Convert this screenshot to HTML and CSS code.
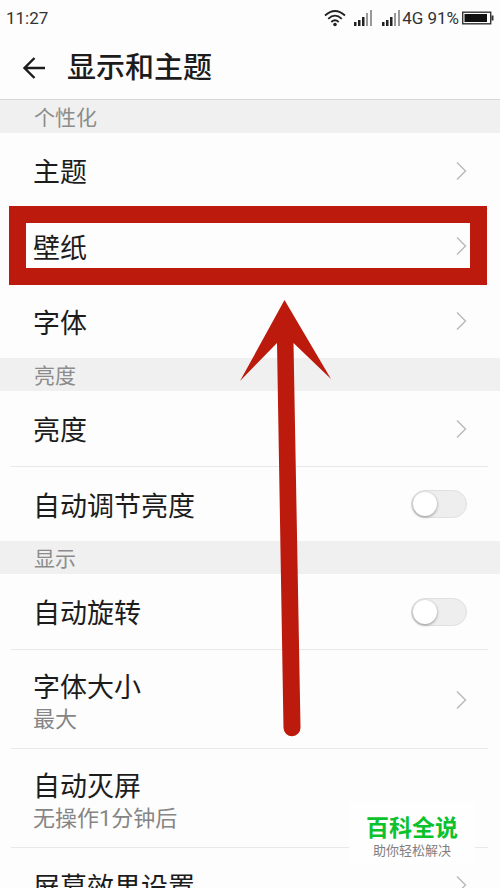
FILE: index.html
```html
<!DOCTYPE html>
<html lang="zh-CN">
<head>
    <meta charset="UTF-8">
    <meta name="viewport" content="width=device-width, initial-scale=1.0">
    <title>显示和主题</title>
    <link rel="stylesheet" href="styles.css">
</head>
<body>
    <div class="screen">
        <div class="status-bar">
            <span class="time">11:27</span>
            <div class="status-icons">
                <svg class="wifi" width="22" height="18" viewBox="0 0 22 18" fill="none" stroke="#222" stroke-width="1.800">
                    <path d="M1 6.500Q11 -2.500 21 6.500M4.200 9.800Q11 3.500 17.800 9.800M7.300 13Q11 9.500 14.700 13"/>
                    <circle cx="11" cy="15.500" r="1.800" fill="#222" stroke="none"/>
                </svg>
                <svg class="signal" width="19" height="18" viewBox="0 0 19 18">
                    <path d="M0 13h2.500v4H0zM4 11h2.500v6H4zM8 8h2.500v9H8z" fill="#222"/>
                    <path d="M12 4h2v13h-2zM16 1h2v16h-2z" fill="#999"/>
                </svg>
                <svg class="signal-2" width="19" height="18" viewBox="0 0 19 18">
                    <path d="M0 13h2.500v4H0zM4 11h2.500v6H4zM8 8h2.500v9H8z" fill="#222"/>
                    <path d="M12 4h2v13h-2zM16 1h2v16h-2z" fill="#999"/>
                </svg>
                <span class="network">4G</span>
                <span class="percent">91%</span>
                <svg class="battery" width="32" height="14" viewBox="0 0 32 14">
                    <rect x="0.700" y="1.200" width="28" height="11.600" fill="none" stroke="#333" stroke-width="1.400"/>
                    <path d="M2.500 3h22.500v8H2.500z" fill="#111"/>
                    <path d="M29.500 4.500h2v5h-2z" fill="#333"/>
                </svg>
            </div>
        </div>

        <header class="header">
            <button class="back" aria-label="返回">
                <svg width="24" height="24" viewBox="0 0 24 24" fill="none" stroke="#1c1c1c" stroke-width="2.400">
                    <path d="M12.500 2L2.500 12l10 10M2.500 12H23"/>
                </svg>
            </button>
            <h1>显示和主题</h1>
        </header>

        <main>
            <h2>个性化</h2>
            <ul>
                <li>
                    <a class="row" href="#">
                        <span class="title">主题</span>
                        <svg class="chevron" width="12" height="20" viewBox="0 0 12 20"><path d="M2 1.500L10.500 10 2 18.500"/></svg>
                    </a>
                </li>
                <li class="marked">
                    <a class="row" href="#">
                        <span class="title">壁纸</span>
                        <svg class="chevron" width="12" height="20" viewBox="0 0 12 20"><path d="M2 1.500L10.500 10 2 18.500"/></svg>
                    </a>
                </li>
                <li>
                    <a class="row" href="#">
                        <span class="title">字体</span>
                        <svg class="chevron" width="12" height="20" viewBox="0 0 12 20"><path d="M2 1.500L10.500 10 2 18.500"/></svg>
                    </a>
                </li>
            </ul>

            <h2>亮度</h2>
            <ul>
                <li>
                    <a class="row" href="#">
                        <span class="title">亮度</span>
                        <svg class="chevron" width="12" height="20" viewBox="0 0 12 20"><path d="M2 1.500L10.500 10 2 18.500"/></svg>
                    </a>
                </li>
                <li>
                    <div class="row">
                        <label class="title" for="autoBrightness">自动调节亮度</label>
                        <input class="switch" type="checkbox" id="autoBrightness">
                    </div>
                </li>
            </ul>

            <h2>显示</h2>
            <ul>
                <li>
                    <div class="row">
                        <label class="title" for="autoRotate">自动旋转</label>
                        <input class="switch" type="checkbox" id="autoRotate">
                    </div>
                </li>
                <li>
                    <a class="row double" href="#">
                        <span class="title">字体大小<small>最大</small></span>
                        <svg class="chevron" width="12" height="20" viewBox="0 0 12 20"><path d="M2 1.500L10.500 10 2 18.500"/></svg>
                    </a>
                </li>
                <li>
                    <a class="row double" href="#">
                        <span class="title">自动灭屏<small>无操作1分钟后</small></span>
                    </a>
                </li>
                <li>
                    <a class="row" href="#">
                        <span class="title">屏幕效果设置</span>
                        <svg class="chevron" width="12" height="20" viewBox="0 0 12 20"><path d="M2 1.500L10.500 10 2 18.500"/></svg>
                    </a>
                </li>
            </ul>
        </main>

        <!-- arrow pointing to the wallpaper row -->
        <svg class="arrow" width="92" height="438" viewBox="0 0 92 438">
            <path d="M44.500 0L91 79 53.500 43 60.500 427.500A8.500 8.500 0 0 1 43.500 428L37 43 0 81z" fill="#bb1a0c"/>
        </svg>

        <div class="badge">
            <strong>百科全说</strong>
            <span>助你轻松解决</span>
        </div>
    </div>
</body>
</html>
```
FILE: styles.css
```css
* {
    box-sizing: border-box;
}
body {
    margin: 0;
    font-family: Roboto, "Noto Sans CJK SC", sans-serif;
    color: #1c1c1c;
    background-color: #fdfdfd;
}
.screen {
    position: relative;
    height: 100vh;
    overflow: hidden;
}
.status-bar {
    display: flex;
    align-items: center;
    justify-content: space-between;
    height: 36px;
    padding: 0 6px;
    font-size: 17px;
    color: #333;
}
.status-icons {
    display: flex;
    align-items: center;
}
.signal {
    margin-left: 8px;
}
.signal-2 {
    margin-left: 9px;
}
.network {
    margin-left: 1px;
}
.percent {
    margin: 0 3px 0 4px;
}
.header {
    display: flex;
    align-items: center;
    height: 63px;
    padding-left: 22px;
}
.back {
    display: flex;
    padding: 0;
    border: none;
    background: none;
    cursor: pointer;
}
h1 {
    margin: 0 0 0 21px;
    font-size: 29px;
    font-weight: 500;
    line-height: 40px;
}
h2 {
    margin: 0;
    padding: 4px 0 0 34px;
    font-size: 21px;
    font-weight: 400;
    line-height: 29px;
    color: #8c8c8c;
    background-color: #f0f0f0;
}
h2:first-child {
    border-top: 1px solid #d8d8d8;
}
ul {
    margin: 0;
    padding: 0;
    list-style: none;
}
li {
    position: relative;
    padding: 0 12px 0 11px;
}
.row {
    display: flex;
    align-items: center;
    justify-content: space-between;
    min-height: 75px;
    padding: 0 21px 0 22px;
    color: inherit;
    text-decoration: none;
}
li + li .row {
    border-top: 1px solid #e8e8e8;
}
.title {
    padding-top: 5px;
    font-size: 27px;
    line-height: 36px;
}
.double {
    padding-top: 15px;
    padding-bottom: 14px;
}
small {
    display: block;
    font-size: 22px;
    line-height: 28px;
    color: #858585;
}
.chevron {
    fill: none;
    stroke: #b8b8b8;
    stroke-width: 1.4;
}
.switch {
    appearance: none;
    width: 56px;
    height: 28px;
    margin: 0;
    border: 1px solid #e0e0e0;
    border-radius: 14px;
    background-color: #eee;
    cursor: pointer;
}
.switch::before {
    content: "";
    display: block;
    width: 24px;
    height: 24px;
    margin: 1px;
    border-radius: 50%;
    background-color: #fff;
    box-shadow: 0 1px 3px rgba(0, 0, 0, 0.4);
}
.switch:checked {
    background-color: #45c01a;
}
.switch:checked::before {
    margin-left: 29px;
}
.marked {
    z-index: 1;
}
.marked::after {
    content: "";
    position: absolute;
    top: -2px;
    right: 13px;
    bottom: -2px;
    left: 9px;
    border: 17px solid #bb1a0c;
    pointer-events: none;
}
.arrow {
    position: absolute;
    top: 300px;
    left: 240px;
    pointer-events: none;
}
.badge {
    position: absolute;
    right: 25px;
    bottom: 24px;
    z-index: 2;
    display: flex;
    flex-direction: column;
    align-items: center;
    width: 126px;
    padding: 12px 0 4px;
    background-color: #fefefe;
}
.badge strong {
    font-size: 23px;
    line-height: 27px;
    color: #0bc22c;
}
.badge span {
    font-size: 13px;
    line-height: 18px;
    color: #808080;
}
```
